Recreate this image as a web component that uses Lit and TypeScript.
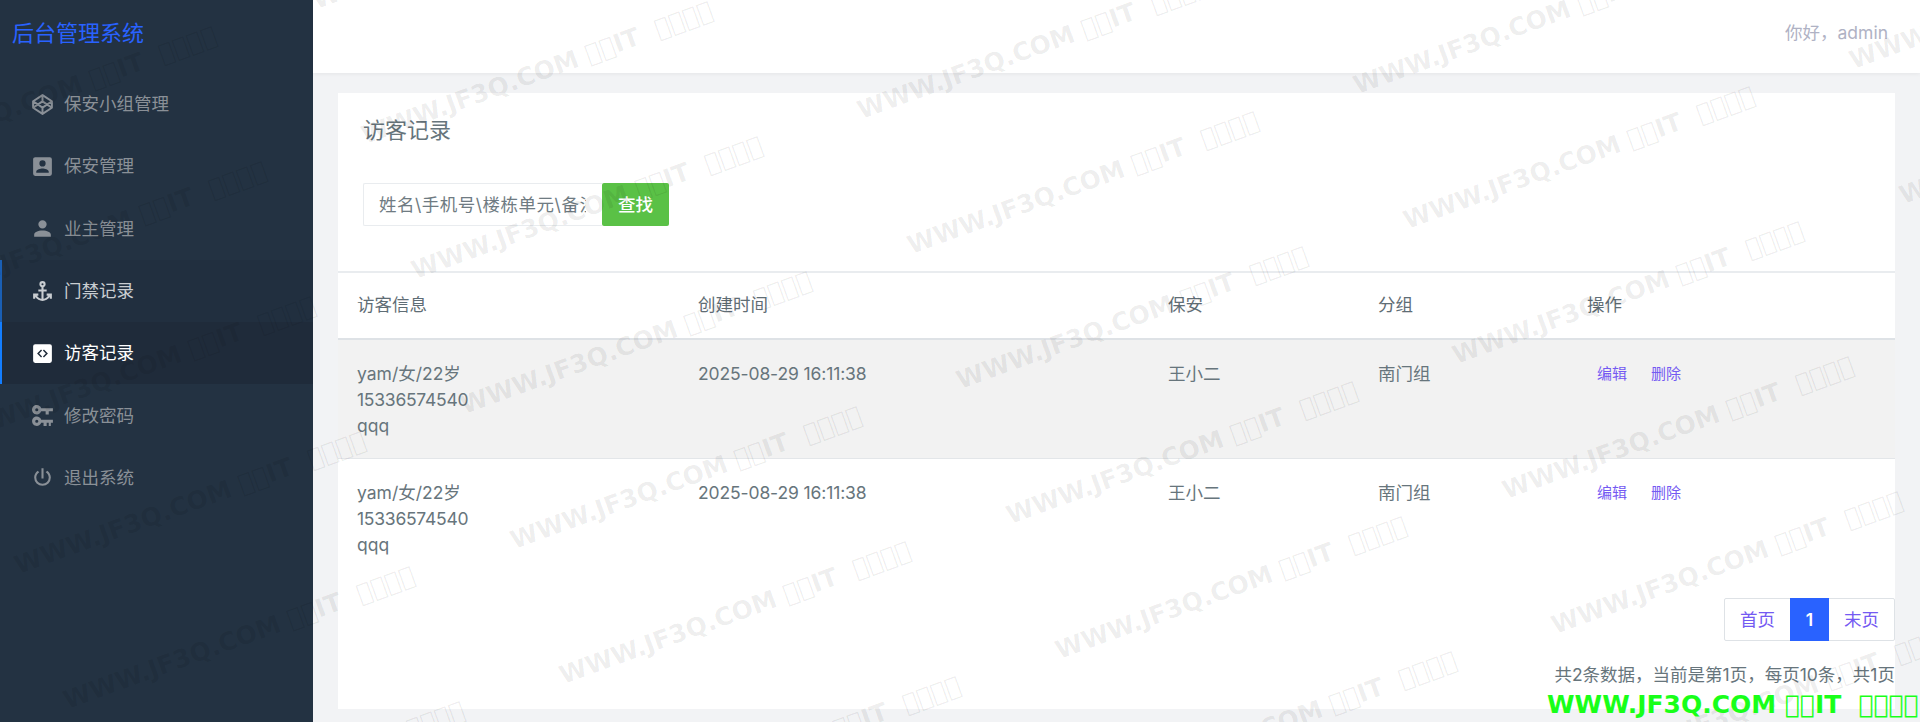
import { LitElement, html, css, svg } from "lit";
import { customElement } from "lit/decorators.js";

const WM = "WWW.JF3Q.COM \uE000\uE000IT  \uE000\uE000\uE000\uE000";

const ICONS: Record<string, any> = {
  codepen: svg`<path class="line" d="M12,3L21,8.9V15.1L12,21L3,15.1V8.9ZM12,3V9M12,15V21M3,8.9L12,15L21,8.9M3,15.1L12,9L21,15.1"/>`,
  box: svg`<path d="M6,17C6,15 10,13.9 12,13.9C14,13.9 18,15 18,17V18H6M15,9A3,3 0 0,1 12,12A3,3 0 0,1 9,9A3,3 0 0,1 12,6A3,3 0 0,1 15,9M3,5V19A2,2 0 0,0 5,21H19A2,2 0 0,0 21,19V5A2,2 0 0,0 19,3H5C3.89,3 3,3.9 3,5Z"/>`,
  account: svg`<path d="M12,4A4,4 0 0,1 16,8A4,4 0 0,1 12,12A4,4 0 0,1 8,8A4,4 0 0,1 12,4M12,14C16.42,14 20,15.79 20,18V20H4V18C4,15.79 7.58,14 12,14Z"/>`,
  anchor: svg`<path d="M12,2A3,3 0 0,0 9,5C9,6.27 9.8,7.4 11,7.83V10H8V12H11V18.92C9.16,18.63 7.53,17.57 6.53,16H8V14H3V19H5V17.3C6.58,19.61 9.2,21 12,21C14.8,21 17.42,19.61 19,17.31V19H21V14H16V16H17.46C16.46,17.56 14.83,18.63 13,18.92V12H16V10H13V7.82C14.2,7.4 15,6.27 15,5A3,3 0 0,0 12,2M12,4A1,1 0 0,1 13,5A1,1 0 0,1 12,6A1,1 0 0,1 11,5A1,1 0 0,1 12,4Z"/>`,
  code: svg`<path fill-rule="evenodd" d="M5,3H19A2,2 0 0,1 21,5V19A2,2 0 0,1 19,21H5A2,2 0 0,1 3,19V5A2,2 0 0,1 5,3ZM10.6,8.2L6.8,12L10.6,15.8L11.6,14.8L8.8,12L11.6,9.2ZM13.4,8.2L12.4,9.2L15.2,12L12.4,14.8L13.4,15.8L17.2,12Z"/>`,
  keys: svg`<path fill-rule="evenodd" d="M6.5,2C8.46,2 10.13,3.25 10.74,5H22V8H18V11H15V8H10.74C10.13,9.75 8.46,11 6.5,11C4,11 2,9 2,6.5C2,4 4,2 6.5,2M6.5,5A1.5,1.5 0 0,0 5,6.5A1.5,1.5 0 0,0 6.5,8A1.5,1.5 0 0,0 8,6.5A1.5,1.5 0 0,0 6.5,5M6.5,13C8.46,13 10.13,14.25 10.74,16H22V19H20V22H18V19H16V22H13V19H10.74C10.13,20.75 8.46,22 6.5,22C4,22 2,20 2,17.5C2,15 4,13 6.5,13M6.5,16A1.5,1.5 0 0,0 5,17.5A1.5,1.5 0 0,0 6.5,19A1.5,1.5 0 0,0 8,17.5A1.5,1.5 0 0,0 6.5,16Z"/>`,
  power: svg`<path d="M16.56,5.44L15.11,6.89C16.84,7.94 18,9.83 18,12A6,6 0 0,1 12,18A6,6 0 0,1 6,12C6,9.83 7.16,7.94 8.88,6.88L7.44,5.44C5.36,6.88 4,9.28 4,12A8,8 0 0,0 12,20A8,8 0 0,0 20,12C20,9.28 18.64,6.88 16.56,5.44M13,3H11V13H13"/>`,
};

const MENU = [
  { icon: "codepen", label: "保安小组管理", cls: "" },
  { icon: "box", label: "保安管理", cls: "" },
  { icon: "account", label: "业主管理", cls: "" },
  { icon: "anchor", label: "门禁记录", cls: "hover" },
  { icon: "code", label: "访客记录", cls: "active" },
  { icon: "keys", label: "修改密码", cls: "" },
  { icon: "power", label: "退出系统", cls: "" },
];

const marks: { x: number; y: number }[] = [];
for (let c = -3; c <= 5; c++) {
  for (let r = -2; r <= 7; r++) {
    const x = 863 + c * 496 + r * 49.5;
    const y = 124 - c * 25 + r * 135;
    if (x > -420 && x < 1930 && y > -10 && y < 860) marks.push({ x, y });
  }
}

@customElement("app-root")
export class AppRoot extends LitElement {
  static styles = css`
    :host {
      display: block;
      position: relative;
      height: 722px;
      overflow: hidden;
      font-family: "Inter", "Noto Sans CJK SC", sans-serif;
      font-size: 17.5px;
      line-height: 26px;
      color: #67757c;
      background: #f2f3f5;
    }
    .layout { display: grid; grid-template-columns: 313px 1fr; height: 722px; }
    .side { background: #233242; display: flex; flex-direction: column; }
    .logo { height: 73px; padding: 0 0 8px 12px; box-sizing: border-box; display: flex; align-items: center; color: #2962ff; font-size: 22px; }
    .item { height: 62.3px; flex: none; display: flex; align-items: center; padding-left: 30px; gap: 9px; color: #8a9097; border-left: 2px solid transparent; }
    .item svg { width: 25px; height: 25px; fill: currentColor; flex: none; margin-left: -2px; }
    .item svg .line { fill: none; stroke: currentColor; stroke-width: 1.9; stroke-linejoin: round; }
    .item.hover { background: #212f3f; color: #c9cdd1; border-left-color: #1a5fb4; }
    .item.active { background: #1f2b3a; color: #fff; border-left-color: #137eff; }
    .main { display: flex; flex-direction: column; min-width: 0; }
    .top { height: 73px; background: #fff; box-shadow: 0 1px 4px rgba(0, 0, 0, 0.06); display: flex; align-items: center; justify-content: flex-end; padding: 0 32px 7px 0; box-sizing: border-box; color: #afb2c4; position: relative; }
    .card { background: #fff; margin: 20px 25px 13px; flex: 1; display: flex; flex-direction: column; }
    .title { font-size: 22px; line-height: 30px; padding: 22px 25px 0; color: #67757c; height: 66px; box-sizing: border-box; }
    .search { display: flex; padding: 24px 25px 0; height: 112px; box-sizing: border-box; align-items: flex-start; }
    .search input { width: 239px; height: 43px; box-sizing: border-box; border: 1px solid #e9ecef; border-right: 0; border-radius: 2px 0 0 2px; padding: 0 16px 0 15px; font: inherit; letter-spacing: 0.5px; background: transparent; outline: none; }
    .search input::placeholder { color: #6f7b82; opacity: 1; }
    .search button { width: 67px; height: 43px; background: #5ac146; color: #fff; border: 0; border-radius: 2px; font: inherit; font-weight: 500; padding: 0; }
    table { width: 100%; table-layout: fixed; border-collapse: collapse; border-top: 2px solid #e9ecef; }
    th { text-align: left; font-weight: 400; padding: 19px 20px 20px 19px; height: 26px; border-bottom: 2px solid #dee2e6; color: #5f6d75; }
    td { padding: 21px 20px 19px 19px; vertical-align: top; border-bottom: 1px solid #e3e6e9; }
    tr.alt td { background: #f2f2f2; }
    tr:last-child td { border-bottom: 0; }
    td div { height: 26px; }
    td div.tel { letter-spacing: -0.25px; }
    td.time { letter-spacing: -0.12px; }
    .links { display: flex; gap: 24px; padding-left: 10px; color: #745af2; font-size: 15px; }
    .pager { display: flex; justify-content: flex-end; margin-top: auto; }
    .pages { display: flex; height: 43px; box-sizing: border-box; border: 1px solid #dee2e6; border-radius: 2px; color: #745af2; align-items: stretch; margin-bottom: 21px; }
    .pages span { display: flex; align-items: center; justify-content: center; width: 65px; }
    .pages .on { width: 39px; background: #2962ff; color: #fff; margin: -1px 0; font-weight: 600; }
    .sum { text-align: right; margin-bottom: 21px; color: #67757c; }
    .wm { position: absolute; left: 0; top: 0; width: 0; height: 0; pointer-events: none; }
    .wm span { position: absolute; white-space: pre; font: bold 25px/26px "DejaVu Sans", sans-serif; color: rgba(0, 0, 0, 0.07); transform-origin: 0 100%; transform: translateY(-26px) rotate(-20deg); }
    .stamp { position: absolute; left: 1547px; top: 691px; white-space: pre; font: bold 25px/28px "DejaVu Sans", sans-serif; color: #19ff19; pointer-events: none; }
  `;

  private row(alt: boolean) {
    return html`<tr class=${alt ? "alt" : ""}>
      <td><div>yam/女/22岁</div><div class="tel">15336574540</div><div>qqq</div></td>
      <td class="time">2025-08-29 16:11:38</td>
      <td>王小二</td>
      <td>南门组</td>
      <td><div class="links"><span>编辑</span><span>删除</span></div></td>
    </tr>`;
  }

  render() {
    return html`
      <div class="layout">
        <aside class="side">
          <div class="logo">后台管理系统</div>
          ${MENU.map(
            (m) => html`<div class="item ${m.cls}">
              <svg viewBox="0 0 24 24">${ICONS[m.icon]}</svg><span>${m.label}</span>
            </div>`
          )}
        </aside>
        <div class="main">
          <header class="top">你好，admin</header>
          <section class="card">
            <div class="title">访客记录</div>
            <div class="search">
              <input placeholder="姓名\\手机号\\楼栋单元\\备注" />
              <button>查找</button>
            </div>
            <table>
              <colgroup>
                <col style="width:341px" /><col style="width:470px" /><col style="width:210px" /><col style="width:209px" /><col />
              </colgroup>
              <thead>
                <tr><th>访客信息</th><th>创建时间</th><th>保安</th><th>分组</th><th>操作</th></tr>
              </thead>
              <tbody>${this.row(true)}${this.row(false)}</tbody>
            </table>
            <div class="pager">
              <div class="pages"><span>首页</span><span class="on">1</span><span>末页</span></div>
            </div>
            <div class="sum">共2条数据，当前是第1页，每页10条，共1页</div>
          </section>
        </div>
      </div>
      <div class="wm">
        ${marks.map((m) => html`<span style="left:${m.x}px;top:${m.y}px">${WM}</span>`)}
      </div>
      <div class="stamp">${WM}</div>
    `;
  }
}
